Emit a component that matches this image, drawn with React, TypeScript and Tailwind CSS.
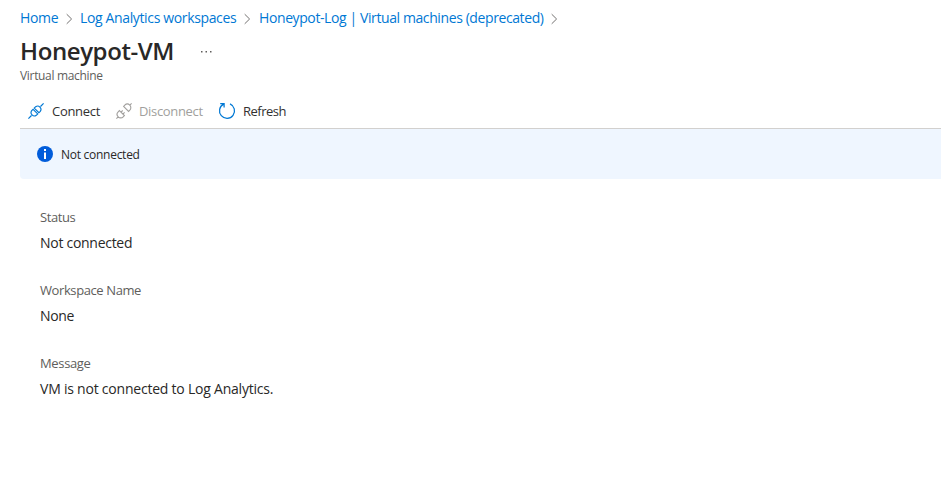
import type { ReactNode } from "react";

function Chevron() {
  return (
    <svg width="8" height="12" viewBox="0 0 8 12" fill="none" stroke="#737170" className="shrink-0">
      <path d="M.7 1.2 5.6 6 .7 10.8" />
    </svg>
  );
}

function ConnectIcon() {
  return (
    <svg width="16" height="16" viewBox="0 0 16 16" fill="none" stroke="#0078d4" strokeWidth="1.15" className="mb-0.5 shrink-0">
      <path d="M.4 15.6 3.5 12.5M12.5 3.5 15.6.4M5.1 6.3 9.7 10.9 8.3 12.3A3.3 3.3 0 0 1 3.7 7.7ZM6.3 5.1 10.9 9.7 12.3 8.3A3.3 3.3 0 0 0 7.7 3.7Z" />
    </svg>
  );
}

function DisconnectIcon() {
  return (
    <svg width="16" height="16" viewBox="0 0 16 16" fill="none" stroke="#a19f9d" strokeWidth="1.1" className="mb-0.5 shrink-0">
      <path d="M.4 15.6 2.4 13.6M13.6 2.4 15.6.4M3.4 7.6 8.4 12.6 7.2 13.8A3.4 3.4 0 0 1 2.2 8.8ZM7.6 3.4 12.6 8.4 13.8 7.2A3.4 3.4 0 0 0 8.8 2.2ZM5 9.2 6.7 7.5M6.9 11.1 8.6 9.4" />
    </svg>
  );
}

function RefreshIcon() {
  return (
    <svg width="18" height="18" viewBox="0 0 18 18" fill="none" stroke="#0078d4" strokeWidth="1.25" className="mb-0.5 shrink-0">
      <path d="M12 1.9A7.5 7.5 0 1 1 5.6 2.1M2.2 1.6H6.1V5.5" />
    </svg>
  );
}

function Field({ label, children }: { label: ReactNode; children: ReactNode }) {
  return (
    <div className="flex h-[73px] flex-col">
      <dt className="h-[26px] text-[13px] leading-5 text-[#605e5c]">{label}</dt>
      <dd className="text-sm leading-5 text-[#292827]">{children}</dd>
    </div>
  );
}

export default function App() {
  return (
    <main className="h-[494px] w-full overflow-hidden bg-white pl-5 font-['Open_Sans','Noto_Sans',sans-serif] text-[#323130]">
      <nav className="flex h-9 items-center pt-px text-sm whitespace-nowrap text-[#0078d4]">
        <a className="w-[46px] pb-0.5 tracking-[-0.35px]">Home</a>
        <Chevron />
        <a className="ml-[6px] w-[164px] pb-0.5 tracking-[-0.36px]">Log Analytics workspaces</a>
        <Chevron />
        <a className="ml-[7px] w-[292px] pb-0.5 tracking-[-0.4px]">Honeypot-Log | Virtual machines (deprecated)</a>
        <Chevron />
      </nav>
      <header className="h-[58px]">
        <div className="flex h-8 items-center">
          <h1 className="w-[180px] pb-0.5 text-2xl leading-8 font-semibold tracking-[-0.4px] whitespace-nowrap text-[#292827]">Honeypot-VM</h1>
          <svg width="12" height="2" viewBox="0 0 12 2" fill="#605e5c">
            <path d="M1 0h1.5v1.5H1zM5.5 0H7v1.5H5.5zM10 0h1.5v1.5H10z" />
          </svg>
        </div>
        <p className="text-xs leading-4 tracking-[-0.32px] text-[#605e5c]">Virtual machine</p>
      </header>
      <div className="flex h-[35px] items-center border-b border-[#d2d0ce] pt-0.5 pl-2 text-[13px] whitespace-nowrap">
        <button className="flex w-[88px] items-center gap-2"><ConnectIcon /><span className="tracking-[-0.3px]">Connect</span></button>
        <button className="flex w-[102px] items-center gap-[7px] text-[#a19f9d]"><DisconnectIcon /><span className="tracking-[-0.33px]">Disconnect</span></button>
        <button className="flex items-center gap-[7px]"><RefreshIcon /><span className="tracking-[-0.5px]">Refresh</span></button>
      </div>
      <div className="flex h-[50px] items-center gap-2 rounded-bl-sm bg-[#eff6ff] pl-[17px] text-xs text-[#292827]">
        <svg width="16" height="16" viewBox="0 0 16 16">
          <circle cx="8" cy="8" r="8" fill="#015cda" />
          <path fill="#fff" d="M7 6.5h2V13H7zM7 3h2v2H7z" />
        </svg>
        <span className="pt-0.5 tracking-[-0.27px]">Not connected</span>
      </div>
      <dl className="pt-7 pl-5">
        <Field label={<span className="tracking-[-0.4px]">Status</span>}><span className="tracking-[-0.28px]">Not connected</span></Field>
        <Field label={<span className="tracking-[-0.4px]">Workspace Name</span>}><span className="tracking-[-0.35px]">None</span></Field>
        <Field label={<span className="tracking-[-0.35px]">Message</span>}><span className="tracking-[-0.22px]">VM is not connected to Log Analytics.</span></Field>
      </dl>
    </main>
  );
}
